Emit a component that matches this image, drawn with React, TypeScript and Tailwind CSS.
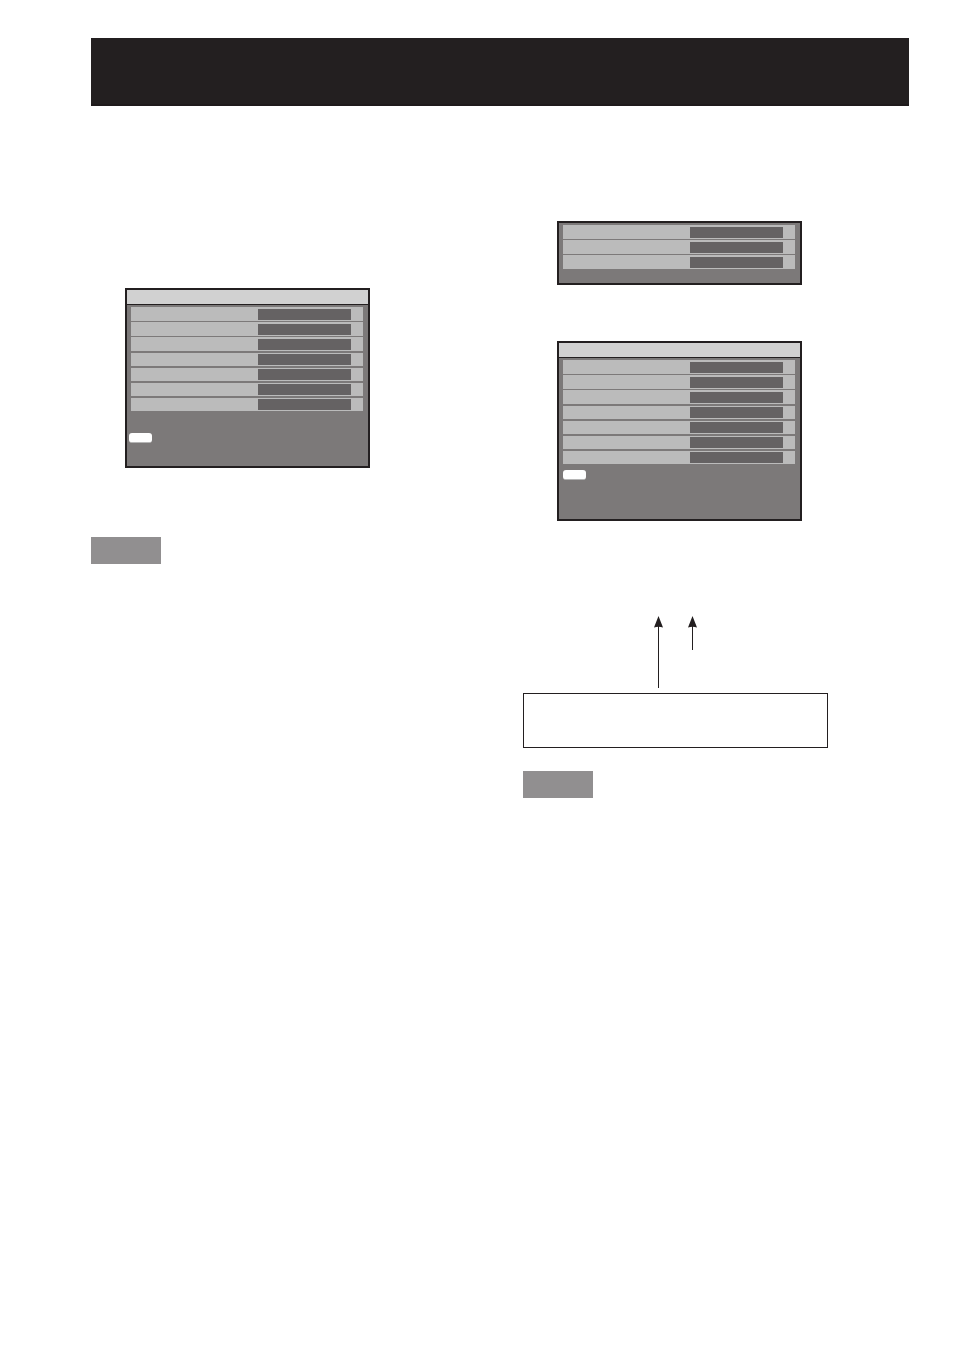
import React from 'react';
import clsx from 'clsx';

const MenuRow = () => (
  <li className="flex h-[15px] items-end justify-end border-t border-[#7c7979] bg-[#bbbbbb] pr-3 pb-px nth-[n+4]:border-t-2">
    <span className="h-[11px] w-[93px] bg-[#656263]" />
  </li>
);

interface MenuPanelProps {
  rows: number;
  hasTitle?: boolean;
  className?: string;
  children?: React.ReactNode;
}

const MenuPanel = ({ rows, hasTitle = false, className, children }: MenuPanelProps) => (
  <section className={clsx('ml-[34px] w-[245px] border-2 border-[#231f20] bg-[#7c7979]', className)}>
    {hasTitle && <header className="h-[15px] border-b border-[#231f20] bg-[#d1d1d1]" />}
    <ul className="pt-px pr-[5px] pl-1">
      {Array.from({ length: rows }, (_, i) => (
        <MenuRow key={i} />
      ))}
    </ul>
    {children}
  </section>
);

const KeyCap = ({ className }: { className?: string }) => (
  <span className={clsx('block h-[10px] w-[23px] rounded-[3px] border-b border-[#b5b5b5] bg-white', className)} />
);

const NoteTag = ({ className }: { className?: string }) => (
  <div className={clsx('h-[27px] w-[70px] bg-[#918f90]', className)} />
);

// Two pointers rising from the box below
const Arrows = () => (
  <svg className="mt-[95px] block" width="305" height="72" viewBox="0 0 305 72" fill="#231f20">
    <rect x="135" y="8" width="1" height="64" />
    <path d="M135.5 0 L140 11.5 Q135.5 10 131 11.5 Z" />
    <rect x="169" y="8" width="1" height="26" />
    <path d="M169.5 0 L174 11.5 Q169.5 10 165 11.5 Z" />
  </svg>
);

const App = () => {
  return (
    <div className="min-h-screen bg-white pt-[38px] pr-[45px] pb-12 pl-[91px] font-['Liberation_Sans',sans-serif]">
      <header className="h-[68px] border-b-2 border-[#1f1a1c] bg-[#231f20]" />

      <main className="grid grid-cols-2 items-start gap-x-[46px]">
        {/* Left column */}
        <div className="pt-[182px]">
          <MenuPanel rows={7} hasTitle className="h-[180px]">
            <KeyCap className="mt-[22px] ml-[2px]" />
          </MenuPanel>
          <NoteTag className="mt-[69px]" />
        </div>

        {/* Right column */}
        <div className="pt-[115px]">
          <MenuPanel rows={3} className="h-16" />
          <MenuPanel rows={7} hasTitle className="mt-14 h-[180px]">
            <KeyCap className="mt-[6px] ml-1" />
          </MenuPanel>
          <Arrows />
          <div className="mt-[5px] h-[55px] w-[305px] border border-[#231f20]" />
          <NoteTag className="mt-[23px]" />
        </div>
      </main>
    </div>
  );
};

export default App;
